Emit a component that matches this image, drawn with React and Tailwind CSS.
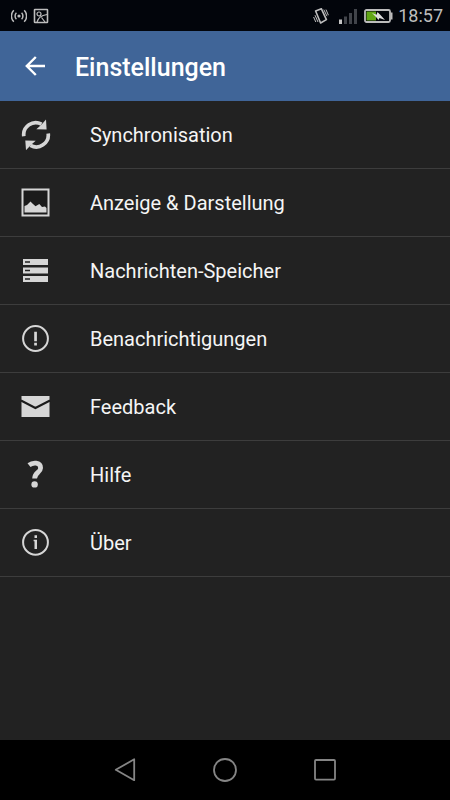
const SyncIcon = () => (
  <svg viewBox="0 0 31 31" className="size-[31px]" aria-hidden="true">
    <path d="M3.8 17.2A12 12 0 0 1 21.5 5.2M28.2 14.4A12 12 0 0 1 10.5 26.4" fill="none" stroke="currentColor" strokeWidth="3.7" />
    <path d="M26 .5 26.6 10.4 16.3 10.2 20 7 22.5 4.6zM5.3 21.5 15.7 21.8 12 25 9.5 27.4 6 31.2z" fill="currentColor" />
  </svg>
);

const PictureIcon = () => (
  <svg viewBox="0 0 31 31" className="size-[31px]" aria-hidden="true">
    <rect x="2.5" y="2.5" width="26" height="26" fill="#1b1b1b" stroke="currentColor" strokeWidth="2" />
    <path d="M4.5 25.5V19L7 18 10.5 14.5 13 17 15.5 19.3 19.3 17 22 20 25 19.5 26.5 21V25.5z" fill="currentColor" />
  </svg>
);

const StorageIcon = () => (
  <svg viewBox="0 0 31 31" className="size-[31px]" aria-hidden="true">
    <path d="M3 4h25v6H3zM3 12.5h25v6H3zM3 21h25v6H3z" fill="currentColor" />
    <path d="M5 7h5M5 15.5h5M5 24h5" stroke="#222" strokeWidth="1.5" />
  </svg>
);

const AlertIcon = () => (
  <svg viewBox="0 0 31 31" className="size-[31px]" aria-hidden="true">
    <circle cx="15.5" cy="15.5" r="12.4" fill="none" stroke="currentColor" strokeWidth="2" />
    <path d="M14.2 8.7h2.7v9.5h-2.7zM14.2 19.7h2.7v2.8h-2.7z" fill="currentColor" />
  </svg>
);

const MailIcon = () => (
  <svg viewBox="0 0 31 31" className="size-[31px]" aria-hidden="true">
    <path d="M1.5 5h28v21h-28z" fill="currentColor" />
    <path d="M1 9.5 15.4 17 30 9.5" fill="none" stroke="#1b1b1b" strokeWidth="2" />
  </svg>
);

const HelpIcon = () => (
  <svg viewBox="0 0 31 31" className="size-[31px]" aria-hidden="true">
    <path d="M9 6.2C12.5 3.4 20.6 2.8 20.6 9 20.6 13.4 14.6 13.6 14.6 19.5" fill="none" stroke="currentColor" strokeWidth="4.8" />
    <circle cx="14.6" cy="25.4" r="3.2" fill="currentColor" />
  </svg>
);

const InfoIcon = () => (
  <svg viewBox="0 0 31 31" className="size-[31px]" aria-hidden="true">
    <circle cx="15.5" cy="15.3" r="12.4" fill="none" stroke="currentColor" strokeWidth="2" />
    <path d="M14.5 8.3H17v2.7h-2.5zM13.6 12.8H17V22h-2.5v-7.8h-.9z" fill="currentColor" />
  </svg>
);

const settings = [
  { label: 'Synchronisation', Icon: SyncIcon },
  { label: 'Anzeige & Darstellung', Icon: PictureIcon },
  { label: 'Nachrichten-Speicher', Icon: StorageIcon },
  { label: 'Benachrichtigungen', Icon: AlertIcon },
  { label: 'Feedback', Icon: MailIcon },
  { label: 'Hilfe', Icon: HelpIcon },
  { label: 'Über', Icon: InfoIcon },
];

const StatusBar = () => (
  <div className="flex h-[31px] items-center bg-[#02050b] pr-[7px] pl-[11px] text-[#bdbdbd]">
    <svg viewBox="0 0 16 16" className="size-4" fill="none" stroke="currentColor" strokeWidth="1.5" aria-hidden="true">
      <circle cx="8" cy="8" r="1.6" fill="currentColor" stroke="none" />
      <path d="M5.4 4.8a4.5 4.5 0 0 0 0 6.4M10.6 4.8a4.5 4.5 0 0 1 0 6.4M2.8 2.2a8.2 8.2 0 0 0 0 11.6M13.2 2.2a8.2 8.2 0 0 1 0 11.6" />
    </svg>
    <svg viewBox="0 0 16 16" className="ml-1.5 size-4" fill="none" stroke="currentColor" strokeWidth="1.6" aria-hidden="true">
      <rect x="1.5" y="1.5" width="13" height="13" rx=".5" />
      <circle cx="6" cy="6" r="2" strokeWidth="1.2" />
      <path d="M4 14C5 9.5 8 7.5 14 6.5M8.5 9.5 12 14" strokeWidth="1.2" />
    </svg>
    <div className="ml-auto flex items-center">
      <svg viewBox="0 0 16 16" className="size-4" fill="none" stroke="currentColor" strokeWidth="1" aria-hidden="true">
        <path d="M2.6 3 8.4.8 13.4 11.6 7.6 15z" strokeLinejoin="round" strokeWidth="1.6" />
        <path d="M2 7.2 5 14M.6 9 2.8 14M10.8 1.6l3.2 6.6M13 1.6l2.4 5.6" />
      </svg>
      <svg viewBox="0 0 18 16" className="ml-2.5 h-4 w-[18px]" aria-hidden="true">
        <path d="M0 11.5h3V16H0z" fill="#c4c4c4" />
        <path d="M5 8.5h3V16H5zM10 5h3v11h-3zM15 1h3v15h-3z" fill="#41444a" />
      </svg>
      <svg viewBox="0 0 29 14" className="ml-[7px] h-3.5 w-[29px]" aria-hidden="true">
        <rect x="1" y="1" width="25" height="12" rx="1.5" fill="#02050b" stroke="currentColor" strokeWidth="1.8" />
        <path d="M26.5 3.5h2v7h-2z" fill="currentColor" />
        <path d="M2.5 2.5H12v9H2.5z" fill="#61a616" />
        <path d="M8 4 12.5 5.8 13.5 3 16.5 6 21 11 15.5 9 14.5 11 12.5 8.6z" fill="#dedede" />
      </svg>
      <time dateTime="18:57" className="ml-[5px] text-lg leading-7">18:57</time>
    </div>
  </div>
);

const NavigationBar = () => (
  <nav aria-label="System" className="flex h-[60px] justify-center bg-black text-[#858585]">
    <button type="button" aria-label="Zurück" className="flex w-[100px] items-center justify-center">
      <svg viewBox="0 0 24 24" className="size-6" fill="none" stroke="currentColor" strokeWidth="1.8" aria-hidden="true">
        <path d="M21.2 1.3V22.2L2.8 11.8z" strokeLinejoin="round" />
      </svg>
    </button>
    <button type="button" aria-label="Startseite" className="flex w-[100px] items-center justify-center">
      <svg viewBox="0 0 24 24" className="size-6" fill="none" stroke="currentColor" strokeWidth="1.8" aria-hidden="true">
        <circle cx="12" cy="12" r="11" />
      </svg>
    </button>
    <button type="button" aria-label="Übersicht" className="flex w-[100px] items-center justify-center">
      <svg viewBox="0 0 24 24" className="size-6" fill="none" stroke="currentColor" strokeWidth="1.8" aria-hidden="true">
        <rect x="2" y="2" width="20" height="19.6" rx="1" />
      </svg>
    </button>
  </nav>
);

const App = () => {
  return (
    <div className="flex min-h-screen flex-col bg-[#222222] font-['Roboto',sans-serif]">
      <StatusBar />

      <header className="flex h-[70px] items-center bg-[#406598] pl-5 text-white">
        <button type="button" aria-label="Zurück" className="flex size-[30px] items-center justify-center">
          <svg viewBox="0 0 30 30" className="size-[30px]" fill="none" stroke="currentColor" strokeWidth="2.4" aria-hidden="true">
            <path d="M25 15H7M15.8 6 6.8 15l9 9" />
          </svg>
        </button>
        <h1 className="mt-1 ml-[25px] text-[25px] leading-8 font-medium">Einstellungen</h1>
      </header>

      <main className="flex-1">
        <ul>
          {settings.map(({ label, Icon }) => (
            <li key={label} className="border-b border-[#3d3d3d]">
              <button type="button" className="flex h-[67px] w-full items-center pl-5 text-left text-[#d6d6d6]">
                <Icon />
                <span className="mt-px ml-[39px] text-xl leading-7 text-[#f5f5f5]">{label}</span>
              </button>
            </li>
          ))}
        </ul>
      </main>

      <NavigationBar />
    </div>
  );
};

export default App;
